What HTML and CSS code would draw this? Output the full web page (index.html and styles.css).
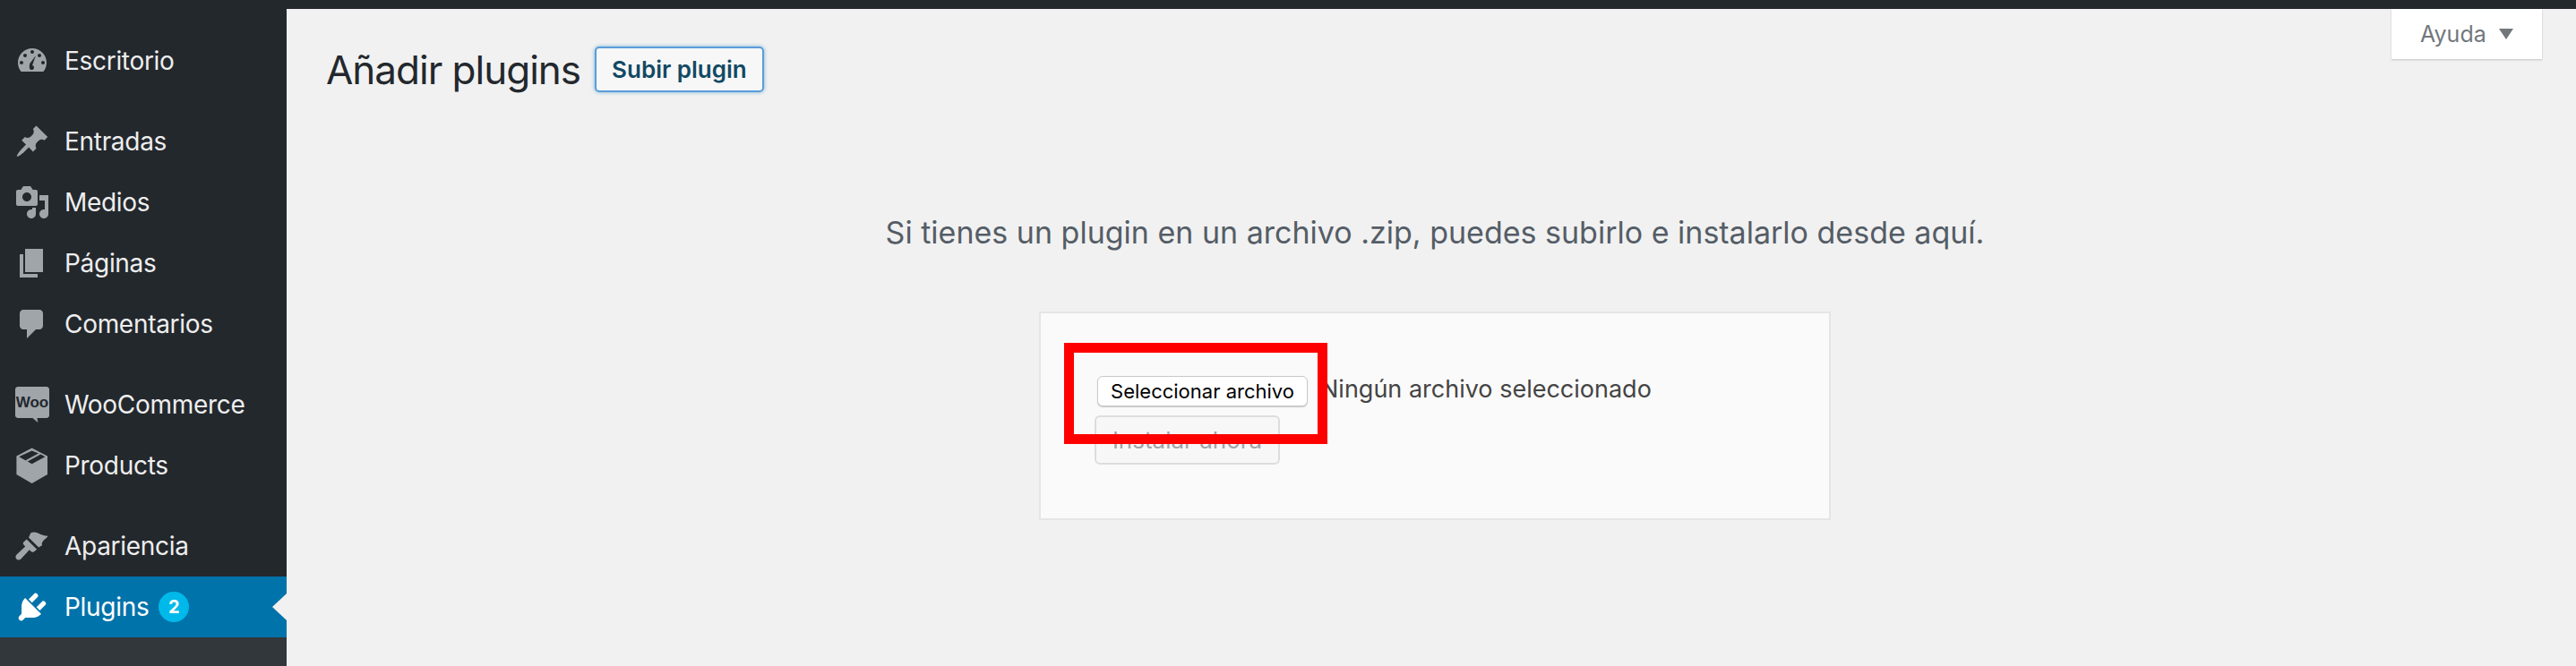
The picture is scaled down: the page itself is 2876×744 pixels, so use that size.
FILE: index.html
```html
<!DOCTYPE html>
<html lang="es">
<head>
  <meta charset="UTF-8">
  <title>Añadir plugins</title>
  <link rel="stylesheet" href="styles.css">
</head>
<body>

  <div class="topbar"></div>

  <div class="layout">
    <aside class="sidebar">
      <ul class="menu">
        <li class="menu-item">
          <svg class="menu-icon" viewBox="0 0 20 20"><path fill-rule="evenodd" d="M3.76 16h12.48c1.1-1.37 1.76-3.11 1.76-5 0-4.42-3.58-8-8-8s-8 3.58-8 8c0 1.89.66 3.63 1.76 5zM10 4c.55 0 1 .45 1 1s-.45 1-1 1-1-.45-1-1 .45-1 1-1zM6 6c.55 0 1 .45 1 1s-.45 1-1 1-1-.45-1-1 .45-1 1-1zm8 0c.55 0 1 .45 1 1s-.45 1-1 1-1-.45-1-1 .45-1 1-1zm-5.37 5.55L12 7l-2 5.5c.55.1 1 .6 1 1.2 0 .7-.6 1.3-1.3 1.3s-1.3-.6-1.3-1.3c0-.9.1-1.6.2-2.15zM4 10c.55 0 1 .45 1 1s-.45 1-1 1-1-.45-1-1 .45-1 1-1zm12 0c.55 0 1 .45 1 1s-.45 1-1 1-1-.45-1-1 .45-1 1-1z"/></svg>
          Escritorio
        </li>
        <li class="menu-item menu-gap">
          <svg class="menu-icon" viewBox="0 0 20 20"><path d="M10.44 3.02l1.82-1.82 6.36 6.35-1.83 1.82c-1.05-.68-2.48-.57-3.41.36l-.75.75c-.92.93-1.04 2.35-.35 3.41l-1.83 1.82-2.41-2.41-2.8 2.79c-.42.42-3.38 2.71-3.8 2.29s1.86-3.39 2.28-3.81l2.79-2.79L4.1 9.36l1.83-1.82c1.05.69 2.48.57 3.4-.36l.75-.75c.93-.92 1.05-2.35.36-3.41z"/></svg>
          Entradas
        </li>
        <li class="menu-item">
          <svg class="menu-icon" viewBox="0 0 20 20"><path fill-rule="evenodd" d="M13 11V4c0-.55-.45-1-1-1h-1.67L9 1H5L3.67 3H2c-.55 0-1 .45-1 1v7c0 .55.45 1 1 1h10c.55 0 1-.45 1-1zM7 4.5c1.38 0 2.5 1.12 2.5 2.5S8.38 9.5 7 9.5 4.5 8.38 4.5 7 5.62 4.5 7 4.5zM14 6h5v10.5c0 1.38-1.12 2.5-2.5 2.5S14 17.88 14 16.5s1.12-2.5 2.5-2.5c.17 0 .34.02.5.05V9h-3V6zm-4 8.05V13h2v3.5c0 1.38-1.12 2.5-2.5 2.5S7 17.88 7 16.5 8.12 14 9.5 14c.17 0 .34.02.5.05z"/></svg>
          Medios
        </li>
        <li class="menu-item">
          <svg class="menu-icon" viewBox="0 0 20 20"><path d="M6 15V2h10v13H6zm-1 1h8v2H3V5h2v11z"/></svg>
          Páginas
        </li>
        <li class="menu-item">
          <svg class="menu-icon" viewBox="0 0 20 20"><path d="M5 2h9c1.1 0 2 .9 2 2v7c0 1.1-.9 2-2 2h-2l-5 5v-5H5c-1.1 0-2-.9-2-2V4c0-1.1.9-2 2-2z"/></svg>
          Comentarios
        </li>
        <li class="menu-item menu-gap">
          <svg class="menu-icon" viewBox="0 0 20 20"><path d="M2 0h16c.8 0 1.500.7 1.500 1.500v14.500c0 .8-.7 1.500-1.500 1.500h-5.300l.5 2.500-3-2.500H2c-.8 0-1.500-.7-1.500-1.500V1.500C.5.7 1.200 0 2 0z"/><text class="woo-text" x="10" y="11.6" text-anchor="middle">Woo</text></svg>
          WooCommerce
        </li>
        <li class="menu-item">
          <svg class="menu-icon" viewBox="0 0 20 20"><path fill-rule="evenodd" d="M9.800.2l8.700 4.500v10.300L9.800 20 1.200 15V4.700zM2.600 5.100l7.200 4 7.400-4-2.500-1.300-7.300 3.900-1.100-.6 7.200-3.900L9.800 1.700z"/></svg>
          Products
        </li>
        <li class="menu-item menu-gap">
          <svg class="menu-icon" viewBox="0 0 20 20"><path d="M9.200 2.600c1.400-.7 2.800-.4 4 .2 1.600.9 3.600 1.600 5.600 1.600-.7 1.300-2.300 1.900-3.100 3.300-.4.7-.4 1.300-.1 1.800l-2 1.200-5.600-5.400zM6.900 6.300l5.700 5.600-1.600 1.200c-.6.4-1.200.3-1.700-.1l-.9-.9-4.600 5c-.8.8-2 .8-2.600.1-.7-.7-.6-1.800.1-2.500l4.800-4.500-.9-1c-.4-.5-.4-1 0-1.500z"/></svg>
          Apariencia
        </li>
        <li class="menu-item is-active">
          <svg class="menu-icon" viewBox="0 0 20 20"><path d="M13.11 4.36L9.87 7.6 8 5.730l3.240-3.240c.35-.34 1.050-.2 1.560.32.52.51.66 1.210.31 1.550zm-8 1.770l.91-1.120 9.010 9.010-1.190.84c-.71.71-2.630 1.160-3.820 1.160H6.140L4.900 17.260c-.59.59-1.540.59-2.120 0-.59-.58-.59-1.530 0-2.120l1.240-1.240v-3.880c0-1.130.4-3.190 1.090-3.890zm7.260 3.970l3.240-3.240c.34-.35 1.040-.21 1.550.31.52.51.66 1.210.31 1.550l-3.240 3.250z"/></svg>
          Plugins
          <span class="badge">2</span>
        </li>
      </ul>
      <div class="submenu"></div>
    </aside>

    <main class="content">
      <div class="help-tab">
        Ayuda
        <span class="help-arrow"></span>
      </div>

      <div class="title-row">
        <h1>Añadir plugins</h1>
        <a class="title-btn" href="#">Subir plugin</a>
      </div>

      <p class="upload-help">Si tienes un plugin en un archivo .zip, puedes subirlo e instalarlo desde aquí.</p>

      <div class="upload-card">
        <div class="file-row">
          <button class="file-btn">Seleccionar archivo</button>
          <span class="file-name">Ningún archivo seleccionado</span>
        </div>
        <button class="install-btn" disabled>Instalar ahora</button>
        <div class="highlight"></div>
      </div>
    </main>
  </div>

</body>
</html>
```

FILE: styles.css
```css
html, body {
  margin: 0;
  padding: 0;
  height: 100%;
}
body {
  font-family: Inter, 'Liberation Sans', sans-serif;
  background: #f1f1f1;
  color: #23282d;
  overflow: hidden;
  display: flex;
  flex-direction: column;
}
.topbar {
  height: 10px;
  background: #23282d;
  flex: none;
}
.layout {
  flex: 1;
  display: flex;
  min-height: 0;
}

/* sidebar */
.sidebar {
  width: 320px;
  flex: none;
  background: #23282d;
  display: flex;
  flex-direction: column;
}
.menu {
  list-style: none;
  margin: 0;
  padding: 24px 0 0;
}
.menu-item {
  height: 68px;
  display: flex;
  align-items: center;
  padding-left: 16px;
  font-size: 28px;
  letter-spacing: -0.3px;
  color: #eee;
  position: relative;
}
.menu-gap {
  margin-top: 22px;
}
.menu-icon {
  width: 40px;
  height: 40px;
  margin-right: 16px;
  fill: #a0a5aa;
  flex: none;
  overflow: visible;
}
.woo-text {
  font-family: 'Liberation Sans', sans-serif;
  font-size: 8.5px;
  font-weight: 700;
  letter-spacing: 0;
  fill: #23282d;
}
.is-active {
  background: #0073aa;
  color: #fff;
}
.is-active .menu-icon {
  fill: #fff;
}
.is-active::after {
  content: "";
  position: absolute;
  right: 0;
  top: 19px;
  border: 15px solid transparent;
  border-left: 0;
  border-right: 16px solid #f1f1f1;
}
.badge {
  width: 34px;
  height: 34px;
  margin-left: 11px;
  border-radius: 50%;
  background: #00b9eb;
  color: #fff;
  font-size: 20px;
  font-weight: 700;
  letter-spacing: 0;
  display: flex;
  align-items: center;
  justify-content: center;
}
.submenu {
  flex: 1;
  background: #32373c;
}

/* content */
.content {
  flex: 1;
  position: relative;
  padding: 0 36px 0 44px;
  min-width: 0;
}
.help-tab {
  position: absolute;
  top: 0;
  right: 38px;
  width: 168px;
  height: 56px;
  box-sizing: border-box;
  padding-left: 32px;
  background: #fff;
  box-shadow: 0 1px 2px rgba(0,0,0,0.2);
  color: #72777c;
  font-size: 25px;
  display: flex;
  align-items: center;
}
.help-arrow {
  margin-left: 14px;
  border: 8px solid transparent;
  border-bottom: 0;
  border-top: 12px solid #72777c;
}
.title-row {
  display: flex;
  align-items: center;
  height: 51px;
  margin-top: 42px;
}
.title-row h1 {
  margin: 0;
  font-size: 44px;
  font-weight: 400;
  letter-spacing: -1px;
  color: #23282d;
}
.title-btn {
  margin-left: 16px;
  height: 51px;
  box-sizing: border-box;
  padding: 0 17px;
  display: flex;
  align-items: center;
  border: 2px solid #5b9dd9;
  border-radius: 5px;
  background: #f7f7f7;
  box-shadow: 0 0 4px rgba(30,140,190,0.6);
  color: #124964;
  font-size: 26px;
  font-weight: 600;
  text-decoration: none;
}
.upload-help {
  margin: 134px 0 0;
  text-align: center;
  font-size: 34px;
  line-height: 46px;
  color: #555d66;
}
.upload-card {
  position: relative;
  width: 884px;
  height: 233px;
  box-sizing: border-box;
  margin: 65px auto 0;
  padding: 70px 0 0 60px;
  background: #fafafa;
  border: 2px solid #e5e5e5;
}
.file-row {
  display: flex;
  align-items: flex-start;
}
.file-btn {
  width: 235px;
  height: 34px;
  margin-left: 3px;
  padding: 0;
  background: #fff;
  border: 1px solid #c9c9c9;
  border-radius: 6px;
  box-shadow: 0 1px 1px rgba(0,0,0,0.2);
  color: #000;
  font-family: inherit;
  font-size: 22px;
}
.file-name {
  margin: -2px 0 0 14px;
  font-size: 27px;
  line-height: 34px;
  color: #444;
}
.install-btn {
  display: block;
  width: 207px;
  height: 55px;
  margin-top: 10px;
  padding: 0;
  background: #f7f7f7;
  border: 2px solid #ddd;
  border-radius: 6px;
  color: #a0a5aa;
  font-family: inherit;
  font-size: 26px;
}
.highlight {
  position: absolute;
  left: 26px;
  top: 33px;
  width: 294px;
  height: 113px;
  box-sizing: border-box;
  border: 11px solid #f00;
}
```
